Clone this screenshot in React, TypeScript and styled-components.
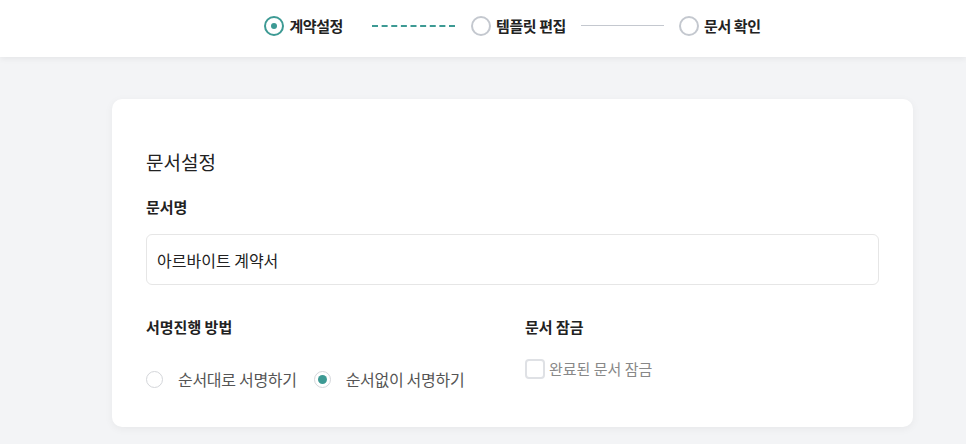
import styled, { createGlobalStyle } from 'styled-components';

const GlobalStyle = createGlobalStyle`
  html, body {
    margin: 0;
    padding: 0;
    background: #f3f4f6;
    font-family: "Noto Sans CJK KR", "Noto Sans", sans-serif;
    color: #222;
  }
`;

const Page = styled.div`
  min-height: 444px;
  display: flex;
  flex-direction: column;
`;

const Header = styled.header`
  height: 57px;
  box-sizing: border-box;
  padding: 0 0 6px 59px;
  background: #fff;
  box-shadow: 0 2px 6px rgba(0, 0, 0, 0.06);
  display: flex;
  justify-content: center;
  align-items: center;
`;

const Steps = styled.div`
  display: flex;
  align-items: center;
`;

const Step = styled.div`
  display: flex;
  align-items: center;
  gap: 5px;
  font-size: 15px;
  font-weight: 700;
  letter-spacing: -0.4px;
  color: #222;
`;

const StepDot = styled.span<{ active?: boolean }>`
  width: 20px;
  height: 20px;
  box-sizing: border-box;
  border-radius: 50%;
  border: 2px solid ${p => (p.active ? '#3d9a94' : '#c4c8cf')};
  display: flex;
  align-items: center;
  justify-content: center;
  &::after {
    content: '';
    width: 6px;
    height: 6px;
    border-radius: 50%;
    background: ${p => (p.active ? '#3d9a94' : 'transparent')};
  }
`;

const Connector = styled.span<{ dashed?: boolean; before: number; after: number }>`
  width: 83px;
  margin: 0 ${p => p.after}px 0 ${p => p.before}px;
  border-top: ${p => (p.dashed ? '2px dashed #3d9a94' : '1px solid #c4c8cf')};
`;

const Main = styled.main`
  padding: 42px 53px 0 112px;
`;

const Card = styled.section`
  background: #fff;
  border-radius: 10px;
  box-shadow: 0 2px 8px rgba(0, 0, 0, 0.05);
  padding: 50px 34px 36px;
  height: 328px;
  box-sizing: border-box;
`;

const Title = styled.h2`
  margin: 0 0 21px;
  font-size: 19px;
  font-weight: 400;
  line-height: 26px;
  color: #222;
`;

const Label = styled.h3`
  margin: 0;
  font-size: 15px;
  font-weight: 700;
  line-height: 22px;
  color: #222;
`;

const TextInput = styled.input`
  display: block;
  width: 100%;
  box-sizing: border-box;
  height: 51px;
  margin: 16px 0 31px;
  padding: 0 10px;
  border: 1px solid #e6e6e6;
  border-radius: 6px;
  font-family: inherit;
  font-size: 16px;
  color: #222;
  outline: none;
`;

const Columns = styled.div`
  display: grid;
  grid-template-columns: 379px 1fr;
`;

const Options = styled.div<{ top: number }>`
  display: flex;
  align-items: center;
  margin-top: ${p => p.top}px;
`;

const RadioOption = styled.label`
  display: flex;
  align-items: center;
  gap: 15px;
  margin-right: 17px;
  font-size: 16px;
  letter-spacing: -0.3px;
  color: #555;
`;

const RadioDot = styled.span<{ checked?: boolean }>`
  width: 17px;
  height: 17px;
  box-sizing: border-box;
  border-radius: 50%;
  border: 1px solid #d4d6da;
  display: flex;
  align-items: center;
  justify-content: center;
  &::after {
    content: '';
    width: 9px;
    height: 9px;
    border-radius: 50%;
    background: ${p => (p.checked ? '#3d9a94' : 'transparent')};
  }
`;

const CheckOption = styled.label`
  display: flex;
  align-items: center;
  gap: 4px;
  font-size: 15px;
  color: #888;
`;

const CheckBox = styled.span`
  width: 20px;
  height: 20px;
  box-sizing: border-box;
  border: 2px solid #dfe1e5;
  border-radius: 4px;
`;

export default function App() {
  return (
    <Page>
      <GlobalStyle />
      <Header>
        <Steps>
          <Step><StepDot active />계약설정</Step>
          <Connector dashed before={29} after={16} />
          <Step><StepDot />템플릿 편집</Step>
          <Connector before={15} after={15} />
          <Step><StepDot />문서 확인</Step>
        </Steps>
      </Header>
      <Main>
        <Card>
          <Title>문서설정</Title>
          <Label>문서명</Label>
          <TextInput defaultValue="아르바이트 계약서" />
          <Columns>
            <div>
              <Label>서명진행 방법</Label>
              <Options top={29}>
                <RadioOption><RadioDot />순서대로 서명하기</RadioOption>
                <RadioOption><RadioDot checked />순서없이 서명하기</RadioOption>
              </Options>
            </div>
            <div>
              <Label>문서 잠금</Label>
              <Options top={20}>
                <CheckOption><CheckBox />완료된 문서 잠금</CheckOption>
              </Options>
            </div>
          </Columns>
        </Card>
      </Main>
    </Page>
  );
}
